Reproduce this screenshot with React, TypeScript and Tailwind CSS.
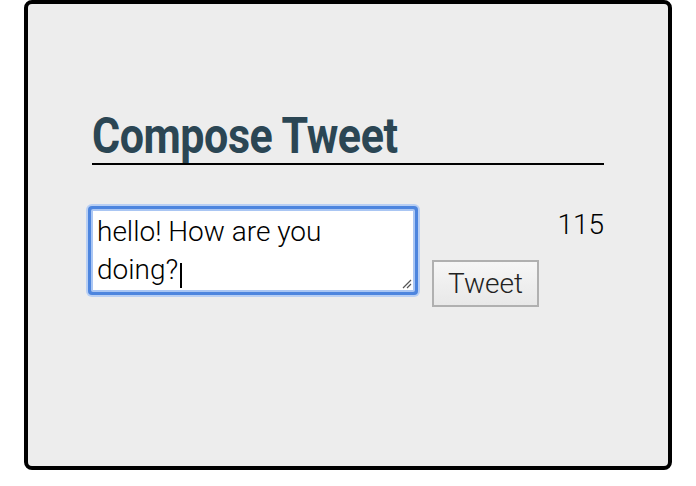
export default function App() {
  return (
    <div className="w-[696px] h-[486px] bg-white">
      <div className="mx-6 h-[470px] rounded-lg border-4 border-black bg-[#ededed] px-16 pt-[106px] font-['Roboto',sans-serif]">
        <h1 className="border-b-2 border-black pb-px text-[50px] font-bold leading-[52px] text-[#2b4654]">
          <span className="inline-block origin-left scale-x-[0.86] tracking-[-0.5px]">Compose Tweet</span>
        </h1>
        <div className="mt-[39px] flex items-start">
          {/* focus ring around the textarea */}
          <div className="relative -ml-[6px] rounded-[6px] bg-[#b8cff4] p-[2px]">
            <div className="rounded-[4px] bg-[#4d85de] p-[3px]">
              <div className="rounded-[2px] bg-[#aac6f3] p-[2px]">
                <textarea
                  className="block h-[79px] w-[320px] resize-none bg-white pl-[4px] pr-[20px] pt-[2px] text-[28px] font-light leading-[38px] text-black outline-none"
                  defaultValue="hello! How are you doing?"
                />
              </div>
            </div>
            <span className="absolute left-[94px] top-[59px] h-[25px] w-[2px] bg-black" />
            <svg className="absolute bottom-[8px] right-[8px]" width="12" height="12" viewBox="0 0 12 12">
              <path d="M11 3 L3 11 M11 7 L7 11" stroke="#555" strokeWidth="1.2" />
            </svg>
          </div>
          <button className="ml-[12px] mt-[56px] h-[47px] w-[107px] border-2 border-[#b0b0b0] bg-gradient-to-b from-[#f6f6f6] to-[#e8e8e8] text-[28px] font-light leading-none text-[#222]">
            Tweet
          </button>
          <div className="ml-auto mt-[2px] text-[28px] font-light leading-[38px] text-black">115</div>
        </div>
      </div>
    </div>
  )
}
